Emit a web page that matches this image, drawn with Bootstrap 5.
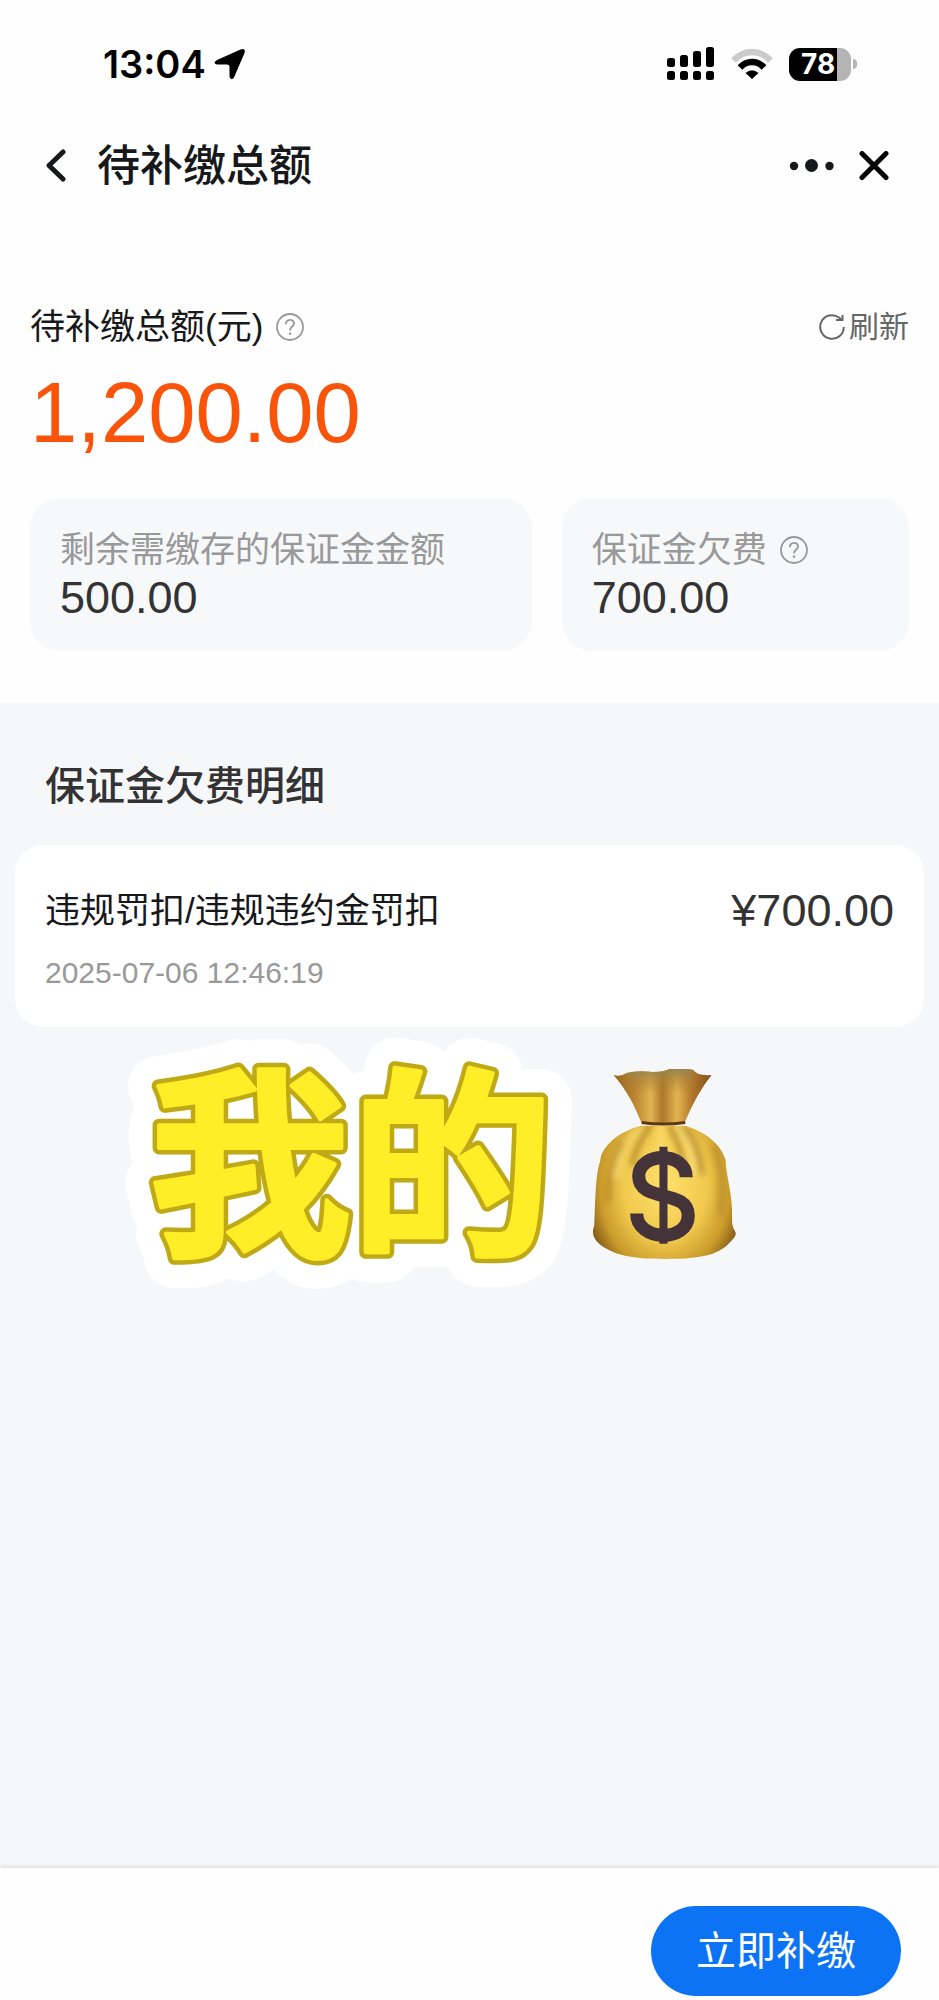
<!DOCTYPE html>
<html lang="zh-CN">
<head>
<meta charset="utf-8">
<meta name="viewport" content="width=device-width, initial-scale=1">
<title>待补缴总额</title>
<link href="https://cdn.jsdelivr.net/npm/bootstrap@5.3.0/dist/css/bootstrap.min.css" rel="stylesheet">
<style>
  body { font-family: "Liberation Sans", "Noto Sans CJK SC", sans-serif; color: #17181a; background: #fefefe; }
  svg { display: block; flex: none; }
  .plain { border: 0; background: none; padding: 0; color: inherit; }

  .status-bar { height: 128px; padding: 0 82px 0 103px; color: #000; font-family: Inter, sans-serif; }
  .clock { font-size: 38px; line-height: 44px; font-weight: 600; }
  .battery { width: 62px; height: 33px; border-radius: 11px; background: linear-gradient(90deg, #000 78%, #b4b4b4 78%); color: #fff; font-size: 28px; line-height: 33px; font-weight: 700; padding-left: 12px; }
  .battery-tip { width: 4px; height: 10px; border-radius: 0 5px 5px 0; background: #b4b4b4; margin-left: 2px; }

  .title-bar { height: 76px; padding: 0 50px 0 45px; }
  .title-bar h1 { font-size: 43px; line-height: 60px; font-weight: 500; margin-left: 30px; }

  .summary { padding: 101px 30px 52px; }
  .text-label { font-size: 35px; line-height: 44px; }
  .help { color: #999; margin-left: 13px; }
  .refresh { font-size: 30px; line-height: 44px; color: #666; }
  .total { font-size: 85px; line-height: 84px; color: #fa530a; margin-top: 22px; }
  .parts { display: grid; grid-template-columns: 13fr 9fr; gap: 30px; margin-top: 43px; }
  .part { background: #f7f8fa; border-radius: 30px; padding: 30px 30px 27px; }
  .part .text-label { color: #999; font-weight: 400; }
  .figure-text { font-size: 45px; line-height: 52px; color: #333; }

  .details { background: #f6f7f9; padding: 55px 15px 40px; }
  .details h2 { font-size: 40px; line-height: 56px; font-weight: 500; color: #333; padding-left: 30px; }
  .record { background: #fff; border-radius: 28px; padding: 40px 30px 34px; margin-top: 31px; }
  .record .text-label { line-height: 52px; }
  .stamp { font-size: 30px; line-height: 40px; color: #999; margin-top: 16px; }
  .stickers { margin: -20px 0 0 107px; gap: 18px; }
  .stickers text { font-family: "Noto Sans CJK SC", sans-serif; font-weight: 700; font-size: 202px; }

  .pay-bar { background: #fefefe; padding: 38px 38px 4px; box-shadow: 0 -1px 5px rgba(0,0,0,.12); position: relative; }
  .btn-pay { --bs-btn-color: #fff; --bs-btn-bg: #0b73f4; --bs-btn-hover-color: #fff; --bs-btn-hover-bg: #0a68dd; font-size: 40px; line-height: 60px; padding: 15px 45px; border: 0; }
</style>
</head>
<body>
<div class="d-flex flex-column min-vh-100">

  <div class="status-bar d-flex align-items-center justify-content-between">
    <div class="d-flex align-items-center">
      <span class="clock">13:04</span>
      <svg class="ms-2" width="32" height="32" viewBox="0 0 32 32" aria-hidden="true"><path d="M3 12 26.500 1.500Q32-.5 30.500 5L20 29.500Q17.500 33 15.500 29V19Q15.500 16.500 13 16.500H3Q-2 15 3 12Z" fill="#000"/></svg>
    </div>
    <div class="d-flex align-items-center">
      <svg width="48" height="34" viewBox="0 0 48 34" aria-hidden="true"><g fill="#000"><rect y="11" width="8" height="9" rx="2.500"/><rect x="13" y="8" width="8" height="12" rx="2.500"/><rect x="26" y="4" width="8" height="16" rx="2.500"/><rect x="39" width="8" height="20" rx="2.500"/><rect y="24" width="8" height="9" rx="2.500"/><rect x="13" y="24" width="8" height="9" rx="2.500"/><rect x="26" y="24" width="8" height="9" rx="2.500"/><rect x="39" y="24" width="8" height="9" rx="2.500"/></g></svg>
      <svg class="ms-3" width="42" height="32" viewBox="0 0 42 32" aria-hidden="true"><g fill="none" stroke-width="6.500"><path d="M2.500 12.500Q10.500 4 21 4T39.500 12.500" stroke="#cbcbcb"/><path d="M9 19.500Q14 14 21 14T33 19.500" stroke="#000"/></g><path d="M21 31 14.500 25Q21 19.500 27.500 25Z"/></svg>
      <div class="d-flex align-items-center ms-3">
        <div class="battery">78</div><div class="battery-tip"></div>
      </div>
    </div>
  </div>

  <header class="title-bar d-flex align-items-center">
    <button class="plain" type="button" aria-label="返回"><svg width="22" height="34" viewBox="0 0 22 34"><path d="M18 3 4 16.500 18 30" fill="none" stroke="#17181a" stroke-width="5" stroke-linecap="round" stroke-linejoin="round"/></svg></button>
    <h1 class="mb-0 me-auto">待补缴总额</h1>
    <button class="plain" type="button" aria-label="更多"><svg width="46" height="14" viewBox="0 0 46 14" fill="#17181a"><circle cx="5" cy="7" r="4.200"/><circle cx="22.500" cy="6.500" r="6.500"/><circle cx="40.500" cy="7" r="4.200"/></svg></button>
    <button class="plain ms-4" type="button" aria-label="关闭"><svg width="30" height="30" viewBox="0 0 30 30"><path d="M3 2.500 27 26.500M27 2.500 3 26.500" stroke="#000" stroke-width="5" stroke-linecap="round"/></svg></button>
  </header>

  <section class="summary">
    <div class="d-flex align-items-center justify-content-between">
      <div class="d-flex align-items-center">
        <span class="text-label">待补缴总额(元)</span>
        <button class="plain help" type="button" aria-label="说明"><svg width="28" height="28" viewBox="0 0 28 28" fill="none" stroke="currentColor"><circle cx="14" cy="14" r="13" stroke-width="1.800"/><path d="M10 11.200C10 5.500 18 5.500 18 10.800C18 13.800 14 13.500 14 17.500" stroke-width="1.900"/><path d="M14 19.500V21.800" stroke-width="2.200"/></svg></button>
      </div>
      <button class="plain refresh d-flex align-items-center" type="button"><svg class="me-1" width="26" height="26" viewBox="0 0 26 26" fill="none" stroke="currentColor" stroke-width="2"><path d="M24.800 13A11.800 11.800 0 1 1 20 3.500L23 6"/><path d="M23.500 1V6H17"/></svg>刷新</button>
    </div>
    <div class="total">1,200.00</div>
    <div class="parts">
      <div class="part">
        <div class="text-label">剩余需缴存的保证金金额</div>
        <div class="figure-text">500.00</div>
      </div>
      <div class="part">
        <div class="d-flex align-items-center">
          <span class="text-label">保证金欠费</span>
          <button class="plain help" type="button" aria-label="说明"><svg width="28" height="28" viewBox="0 0 28 28" fill="none" stroke="currentColor"><circle cx="14" cy="14" r="13" stroke-width="1.800"/><path d="M10 11.200C10 5.500 18 5.500 18 10.800C18 13.800 14 13.500 14 17.500" stroke-width="1.900"/><path d="M14 19.500V21.800" stroke-width="2.200"/></svg></button>
        </div>
        <div class="figure-text">700.00</div>
      </div>
    </div>
  </section>

  <main class="details flex-grow-1">
    <h2 class="mb-0">保证金欠费明细</h2>
    <div class="record">
      <div class="d-flex justify-content-between">
        <span class="text-label">违规罚扣/违规违约金罚扣</span>
        <span class="figure-text">¥700.00</span>
      </div>
      <div class="stamp">2025-07-06 12:46:19</div>
    </div>

    <div class="stickers d-flex align-items-center">
      <svg width="452" height="316" viewBox="0 0 452 316" stroke-linejoin="round">
        <g fill="#fff" stroke="#fff" stroke-width="60" aria-hidden="true"><use href="#mine"/></g>
        <g fill="#bfaa16" stroke="#bfaa16" stroke-width="13" aria-hidden="true"><use href="#mine"/></g>
        <g fill="#ffee27" stroke="#ffee27" stroke-width="4"><text id="mine" x="27" y="233">我的</text></g>
      </svg>
      <svg width="146" height="192" viewBox="0 0 144 190" role="img" aria-label="钱袋">
        <defs>
          <radialGradient id="sack" cx=".5" cy=".6" r=".58"><stop offset="0" stop-color="#ffe06c"/><stop offset=".5" stop-color="#f1c94d"/><stop offset=".78" stop-color="#c99b2b"/><stop offset="1" stop-color="#775014"/></radialGradient>
          <linearGradient id="neck"><stop offset="0" stop-color="#8d6420"/><stop offset=".22" stop-color="#bb8531"/><stop offset=".38" stop-color="#dfb451"/><stop offset=".5" stop-color="#ad782c"/><stop offset=".65" stop-color="#e2b551"/><stop offset=".8" stop-color="#b2772a"/><stop offset="1" stop-color="#805419"/></linearGradient>
          <linearGradient id="rim" x2="0" y2="1"><stop offset="0" stop-color="#96854d"/><stop offset="1" stop-color="#b17a2b" stop-opacity="0"/></linearGradient>
          <filter id="soft" x="-50%" y="-20%" width="200%" height="140%"><feGaussianBlur stdDeviation="3"/></filter>
          <clipPath id="sackShape"><path d="M49 56C22 63 8 80 8 91C3 103 3 135 2 155C-1 162 1 168 8 174C24 186 44 188 72 188C101 188 121 186 134 174C140 168 144 164 141 160C137 153 139 147 138 134C137 118 132 102 132 90C127 74 112 62 91 56Z"/></clipPath>
        </defs>
        <g clip-path="url(#sackShape)">
          <rect width="144" height="190" fill="url(#sack)"/>
          <g filter="url(#soft)" fill="none" stroke-width="5">
            <path d="M58 55Q42 76 40 96M76 55Q91 82 90 98M89 56Q107 78 108 105" stroke="#9f6f1e" opacity=".75"/>
            <path d="M48 58Q28 76 24 108M68 55V90M83 56Q99 75 101 105" stroke="#ffe37a" opacity=".8"/>
            <path d="M31 72Q14 99 16 132M120 75Q132 105 126 144" stroke="#a87a22" opacity=".65"/>
          </g>
        </g>
        <path d="M21 6Q28 8 34 4Q45 1 60 3Q72 3 76 0Q88-2 100 1Q104 7 118 6Q103 25 91 54Q71 57 49 54C42 37 35 22 21 6Z" fill="url(#neck)"/>
        <path d="M34 4Q45 1 60 3Q72 3 76 0Q88-2 100 1L98 24H40Z" fill="url(#rim)"/>
        <path d="M49 53Q70 56 92 53" fill="none" stroke="#603610" stroke-width="3"/>
        <path d="M70.500 77V173" stroke="#443439" stroke-width="8"/>
        <path d="M93 107C93 81 46 82 46 106C46 133 95 118 95 145C95 172 44 171 44 143" fill="none" stroke="#443439" stroke-width="13"/>
      </svg>
    </div>
  </main>

  <footer class="pay-bar d-flex justify-content-end">
    <button class="btn btn-pay rounded-pill" type="button">立即补缴</button>
  </footer>
</div>
<script src="https://cdn.jsdelivr.net/npm/bootstrap@5.3.0/dist/js/bootstrap.bundle.min.js"></script>
</body>
</html>
